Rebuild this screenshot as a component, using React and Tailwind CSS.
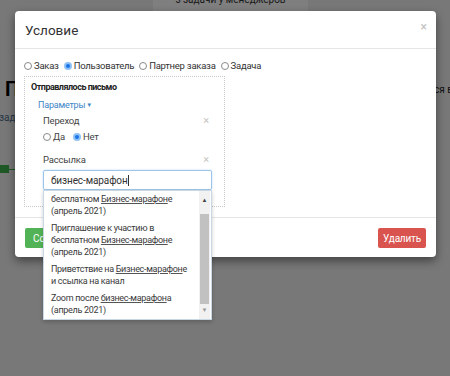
import React from 'react';

const Radio = ({ checked, label }) => (
  <label className="flex items-center gap-[2px]">
    {checked ? (
      <span className="w-[8px] h-[8px] rounded-full bg-[#1a73e8] border-[2px] border-[#8ec2f5]" />
    ) : (
      <span className="w-[8px] h-[8px] rounded-full border border-[#8a8a8a] bg-white" />
    )}
    <span>{label}</span>
  </label>
);

const Hl = ({ children }) => <span className="underline underline-offset-[1px] decoration-[#555]">{children}</span>;

const items = [
  [<>бесплатном <Hl>Бизнес-марафон</Hl>е</>, '(апрель 2021)'],
  ['Приглашение к участию в', <>бесплатном <Hl>Бизнес-марафон</Hl>е</>, '(апрель 2021)'],
  [<>Приветствие на <Hl>Бизнес-марафон</Hl>е</>, 'и ссылка на канал'],
  [<>Zoom после <Hl>бизнес-марафон</Hl>а</>, '(апрель 2021)'],
];

export default function App() {
  return (
    <div className="relative w-[450px] h-[376px] overflow-hidden bg-[#f0f0f0] text-[#333]" style={{ fontFamily: 'Roboto, "Noto Sans", sans-serif' }}>
      {/* page behind the overlay */}
      <div className="flex flex-col">
        <div className="ml-[153px] w-[155px] h-[12px] bg-white flex justify-center items-start text-[10px] leading-[10px] text-[#333] overflow-hidden">
          <span className="-mt-[5px]">з задачи у менеджеров</span>
        </div>
        <div className="flex justify-between items-center mt-[68px] h-[18px]">
          <span className="pl-[5px] text-[20px] font-bold text-black">П</span>
          <span className="text-[10px] text-[#222] -mr-[3px]">тся в</span>
        </div>
        <div className="mt-[12px] text-[10px] text-[#4d6f8c] -ml-[1px]">зад</div>
        <div className="mt-[40px] flex items-center">
          <span className="w-[9px] h-[8px] bg-[#3cb24a]" />
          <span className="w-[20px] h-[1px] bg-[#3cb24a]" />
        </div>
      </div>

      {/* overlay */}
      <div className="absolute inset-0 bg-black/50" />

      {/* modal */}
      <div className="absolute left-[15px] top-[11px] w-[421px] bg-white rounded-[4px] shadow-[0_4px_10px_rgba(0,0,0,0.45)] flex flex-col">
        <div className="h-[38px] pl-[10px] pr-[9px] flex items-center justify-between border-b border-[#e5e5e5]">
          <span className="text-[13.5px] text-[#333] mt-[2px]">Условие</span>
          <span className="text-[12px] text-[#c0c0c0] -mt-[6px]">×</span>
        </div>

        <div className="px-[9px] pt-[10px] pb-[10px] flex flex-col">
          <div className="flex items-center gap-[5px] h-[14px] text-[9.5px] tracking-[-0.25px] text-[#333]">
            <Radio label="Заказ" />
            <Radio checked label="Пользователь" />
            <Radio label="Партнер заказа" />
            <Radio label="Задача" />
          </div>

          <div className="mt-[3px] w-[201px] h-[131px] border border-dotted border-[#c8c8c8] pl-[6px] pr-[12px] pt-[4px] flex flex-col">
            <div className="text-[9px] font-bold tracking-[-0.5px] leading-[12px] text-[#222]">Отправлялось письмо</div>
            <div className="mt-[6px] ml-[7px] text-[9px] tracking-[-0.2px] leading-[12px] text-[#3d85c6] flex items-center">
              Параметры<span className="text-[6px] ml-[1px]">▼</span>
            </div>
            <div className="ml-[12px] flex flex-col text-[9.5px] tracking-[-0.2px] text-[#444]">
              <div className="mt-[4px] flex justify-between items-center h-[12px]">
                <span>Переход</span>
                <span className="text-[11px] text-[#c4c4c4] mr-[3px]">×</span>
              </div>
              <div className="mt-[4px] flex items-center gap-[8px] h-[12px]">
                <Radio label="Да" />
                <Radio checked label="Нет" />
              </div>
              <div className="mt-[11px] flex justify-between items-center h-[12px]">
                <span>Рассылка</span>
                <span className="text-[11px] text-[#c4c4c4] mr-[3px]">×</span>
              </div>
              <div className="mt-[4px] h-[20px] border border-[#9ec5e8] rounded-[2px] flex items-center pl-[7px] text-[10px] tracking-[-0.1px] text-[#333] shadow-[0_0_2px_rgba(102,175,233,0.5)]">
                бизнес-марафон<span className="w-[1px] h-[11px] bg-[#333]" />
              </div>
            </div>
          </div>
        </div>

        <div className="border-t border-[#e5e5e5] px-[10px] pt-[10px] pb-[9px] flex justify-between items-center">
          <button className="h-[20px] px-[8px] bg-[#52b356] text-white text-[10px] rounded-[2px]">Сохранить</button>
          <button className="h-[20px] w-[48px] bg-[#d9534f] text-white text-[10px] tracking-[-0.2px] rounded-[2px]">Удалить</button>
        </div>
      </div>

      {/* autocomplete menu */}
      <div className="absolute left-[43px] top-[190px] w-[169px] h-[130px] bg-white border border-[#c9d6e3] shadow-[0_2px_4px_rgba(0,0,0,0.2)] flex overflow-hidden">
        <div className="flex-1 flex flex-col pl-[7px] text-[9px] tracking-[-0.3px] leading-[12px] text-[#3a3a3a]">
          {items.map((lines, i) => (
            <div key={i} className="py-[2px] mb-[1px]">
              {lines.map((l, j) => (
                <div key={j} className="whitespace-nowrap">{l}</div>
              ))}
            </div>
          ))}
        </div>
        <div className="w-[11px] bg-[#f1f1f1] flex flex-col items-center mr-[1px]">
          <span className="mt-[5px] text-[6px] leading-[8px] text-[#444]">▲</span>
          <div className="mt-[10px] w-[9px] h-[90px] bg-[#c1c1c1]" />
          <span className="mt-[2px] text-[6px] leading-[8px] text-[#999]">▼</span>
        </div>
      </div>
    </div>
  );
}
